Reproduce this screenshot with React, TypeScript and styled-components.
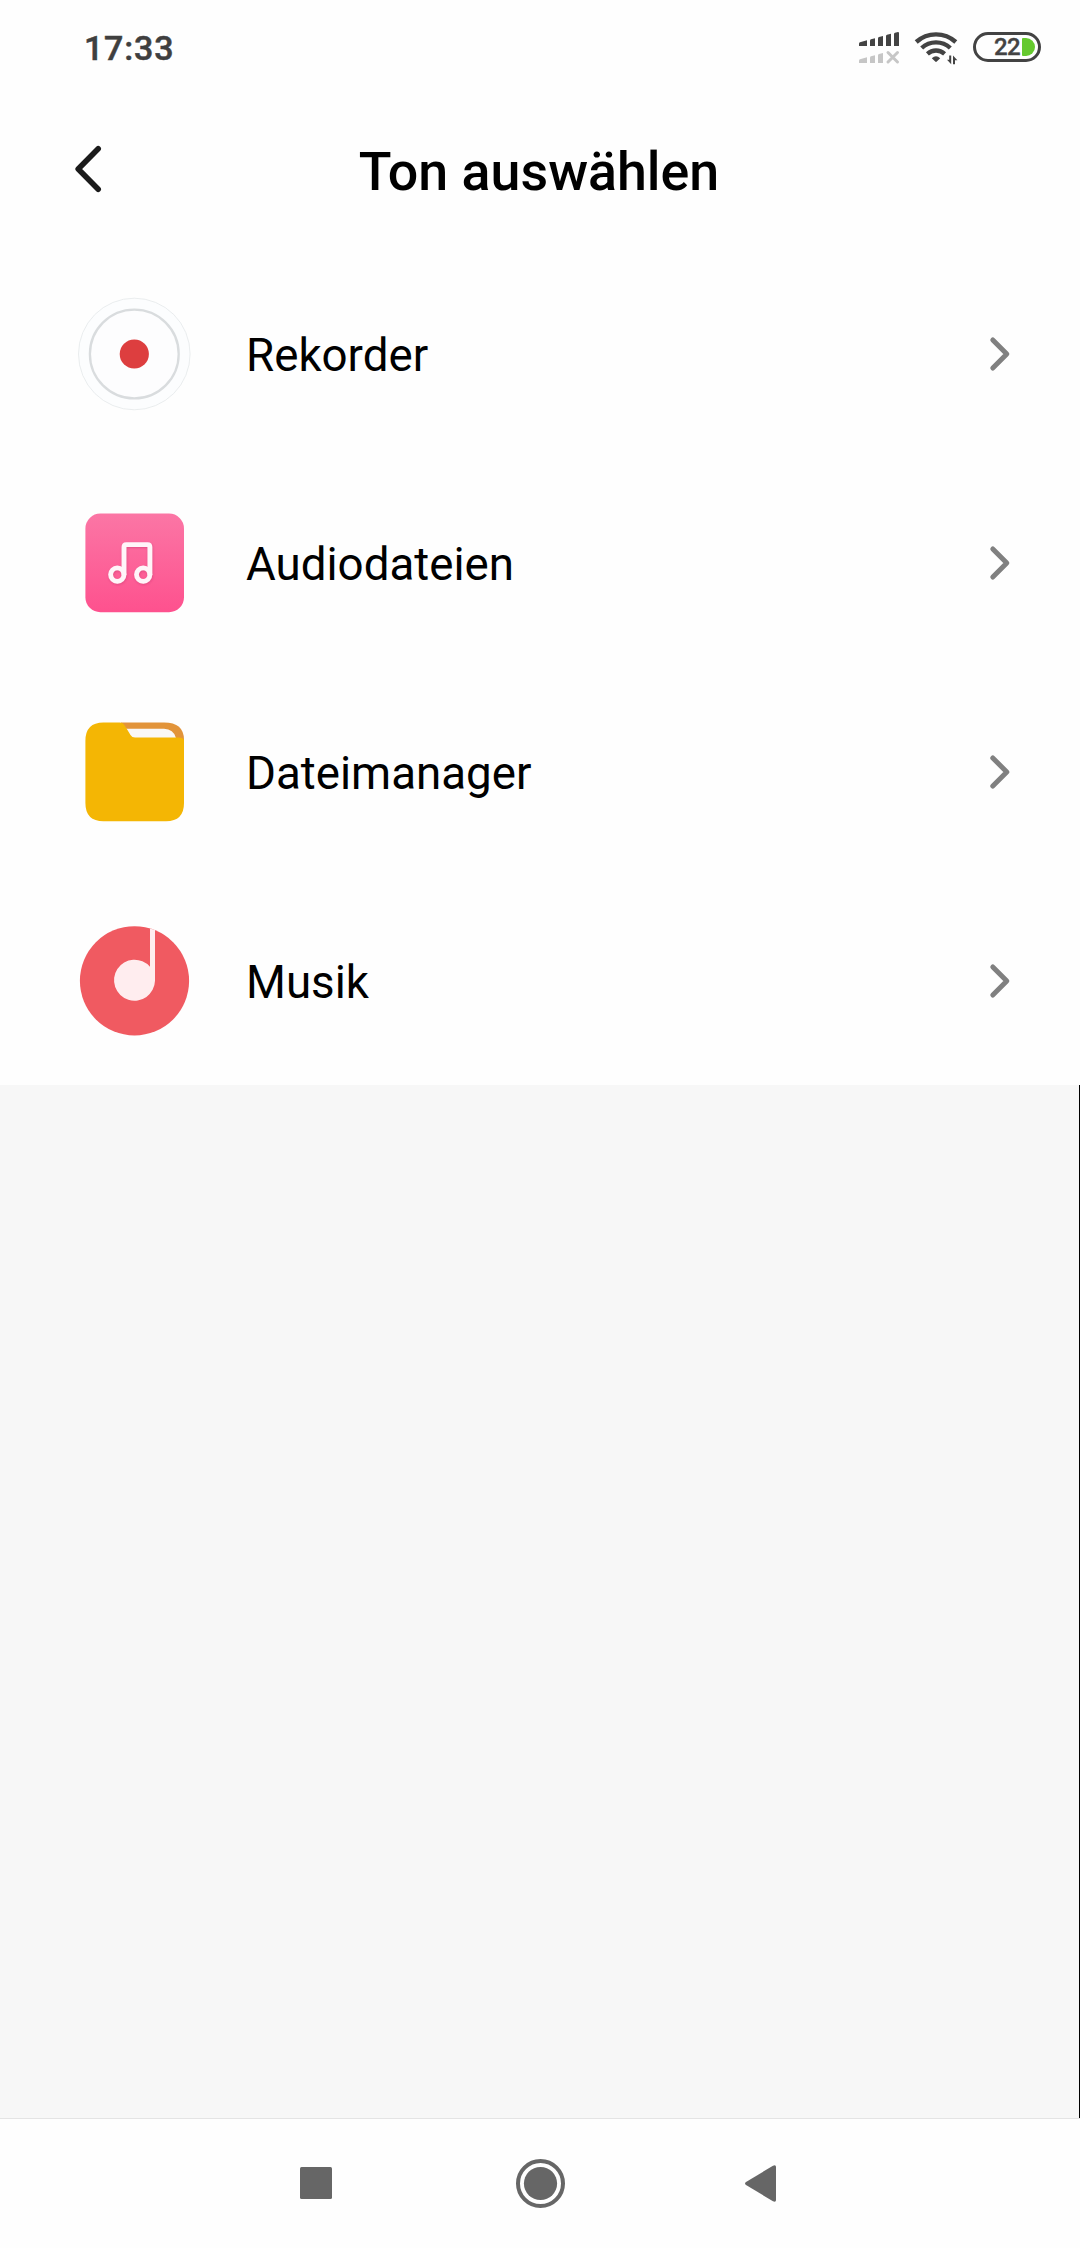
import React from "react";
import styled, { createGlobalStyle } from "styled-components";

const GlobalStyle = createGlobalStyle`
  * { box-sizing: border-box; }
  body { margin: 0; background: #fefefe; font-family: Roboto, "Noto Sans", sans-serif; }
`;

const Screen = styled.div`
  display: flex;
  flex-direction: column;
  width: 1080px;
  height: 2248px;
  background: #fefefe;
  overflow: hidden;
`;

const StatusBar = styled.header`
  display: flex;
  align-items: center;
  justify-content: space-between;
  height: 94px;
  padding: 0 39px 0 84px;
`;

const Time = styled.time`
  font-size: 34px;
  line-height: 40px;
  font-weight: 500;
  letter-spacing: 0.8px;
  color: #3f3f3f;
  padding-top: 1px;
  -webkit-text-stroke: 0.5px #3f3f3f;
`;

const StatusIcons = styled.div`
  display: flex;
  align-items: center;
  gap: 16px;
`;

const Battery = styled.div`
  display: flex;
  align-items: center;
  justify-content: flex-end;
  gap: 2px;
  width: 68px;
  height: 30px;
  padding-right: 3px;
  border: 3px solid #434343;
  border-radius: 15px;
`;

const BatteryLevel = styled.span`
  font-size: 24px;
  line-height: 24px;
  font-weight: 500;
  letter-spacing: -0.7px;
  color: #434343;
  -webkit-text-stroke: 0.3px #434343;
`;

const BatteryFill = styled.span`
  width: 13px;
  height: 18px;
  border-radius: 1px 9px 9px 1px;
  background: #65c92e;
`;

const TitleBar = styled.div`
  display: grid;
  grid-template-columns: 120px 1fr 120px;
  align-items: center;
  height: 155px;
`;

const BackButton = styled.button`
  display: flex;
  align-items: center;
  justify-content: flex-start;
  height: 100px;
  padding: 0 0 5px 75px;
  border: 0;
  background: none;
`;

const Title = styled.h1`
  margin: 0;
  padding-right: 2px;
  font-size: 53.75px;
  line-height: 64px;
  font-weight: 500;
  text-align: center;
  color: #000;
`;

const SourceList = styled.ul`
  margin: 0;
  padding: 0;
  list-style: none;
`;

const SourceRow = styled.li`
  display: grid;
  grid-template-columns: 112px 1fr 20px;
  align-items: center;
  column-gap: 56px;
  height: 209px;
  padding: 0 70px 0 78px;
`;

const Label = styled.span`
  padding-top: 5px;
  font-size: 45.7px;
  line-height: 56px;
  color: #000;
`;

const EmptyArea = styled.main`
  flex: 1;
  background: #f7f7f7;
  border-right: 1px solid #000;
`;

const NavBar = styled.nav`
  display: flex;
  align-items: center;
  height: 130px;
  padding: 0 0 1px 300px;
  border-top: 1px solid #e4e4e4;
`;

const NavIcon = styled.svg<{ $gap?: number; $drop?: number }>`
  display: block;
  flex: none;
  margin-left: ${(p) => p.$gap ?? 0}px;
  margin-top: ${(p) => p.$drop ?? 0}px;
  fill: #666;
`;

const Icon = styled.svg`
  display: block;
  flex: none;
  overflow: visible;
`;

const SignalIcon = () => (
  <Icon width="40" height="32" viewBox="859 31 40 32">
    <g fill="#434343">
      <path d="M860 42.2 L867 40.3 V46 H859 V43.5 Q859 42.5 860 42.2Z" />
      <path d="M870 40.6 Q870 39.6 871 39.3 L875 38.3 V46 H870Z" />
      <path d="M878 38.3 Q878 37.3 879 37 L883 36 V46 H878Z" />
      <path d="M886 36 Q886 35 887 34.7 L891 33.7 V46 H886Z" />
      <path d="M894 34 Q894 33 895 32.8 L898 32 Q899 32 899 33 V46 H894Z" />
    </g>
    <g fill="#c6c6c6">
      <path d="M860 59.2 L867 57.3 V63 H859 V60.5 Q859 59.5 860 59.2Z" />
      <path d="M870 57.6 Q870 56.6 871 56.3 L875 55.3 V63 H870Z" />
      <path d="M878 55.3 Q878 54.3 879 54 L883 53 V63 H878Z" />
    </g>
    <path d="M888 52.5 L897.5 62 M897.5 52.5 L888 62" stroke="#c6c6c6" strokeWidth="3" strokeLinecap="round" />
  </Icon>
);

const WifiIcon = () => (
  <Icon width="42" height="32" viewBox="915 31 42 32">
    <g fill="none" stroke="#434343" strokeWidth="4.4">
      <path d="M916.2 42 A29.5 29.5 0 0 1 955.8 42" />
      <path d="M921.7 48 A21 21 0 0 1 950.3 48" />
      <path d="M927.4 53.8 A13 13 0 0 1 944.6 53.8" />
    </g>
    <path d="M931.8 58.2 Q936 54.2 940.2 58.2 L936.8 61.6 Q936 62.3 935.2 61.6Z" fill="#434343" />
    <path d="M951.2 55.5 V64.2 L947 59.8 H949.2 V55.5Z M953 64.2 V55.5 L957.4 60.2 H955 V64.2Z" fill="#434343" />
  </Icon>
);

const RecorderIcon = () => (
  <Icon width="112" height="112" viewBox="0 0 112 112">
    <circle cx="56.3" cy="56" r="55.8" fill="#fcfdfe" stroke="#e4e8ea" strokeWidth="0.8" />
    <circle cx="56.3" cy="56" r="44.4" fill="#fdfdfe" stroke="#d9dcde" strokeWidth="2.3" />
    <circle cx="56.3" cy="56" r="14.6" fill="#dd3e3f" />
  </Icon>
);

const AudioIcon = () => (
  <Icon width="112" height="112" viewBox="0 0 112 112">
    <defs>
      <linearGradient id="audio-pink" x1="0" y1="0" x2="0" y2="1">
        <stop offset="0" stopColor="#fb76a5" />
        <stop offset="1" stopColor="#fe518e" />
      </linearGradient>
      <filter id="note-shadow" x="-20%" y="-20%" width="140%" height="140%">
        <feDropShadow dx="0.5" dy="1" stdDeviation="1" floodColor="#b82c62" floodOpacity="0.4" />
      </filter>
    </defs>
    <rect x="7.4" y="6.6" width="98.6" height="98.6" rx="15" fill="url(#audio-pink)" />
    <g fill="none" stroke="#fff5f9" strokeWidth="4.8" filter="url(#note-shadow)">
      <circle cx="39.3" cy="67.6" r="6.7" />
      <circle cx="65.2" cy="67.6" r="6.7" />
      <path d="M46 68 V40 Q46 37.7 48.3 37.7 H69.6 Q71.9 37.7 71.9 40 V68" />
    </g>
  </Icon>
);

const FolderIcon = () => (
  <Icon width="112" height="112" viewBox="0 0 112 112">
    <path d="M43 6.6 H86 Q106 6.6 106 24 V40 H43Z" fill="#e2943a" />
    <path d="M46 12.8 H86 Q95.5 13 98 22 H50Z" fill="#faf8f6" />
    <path
      d="M25.5 6.6 H41.5 Q45 6.6 47 10 L52.5 19 Q54 21.5 57 21.5 H101 Q104.5 21.5 106 23.5 V87 Q106 105.2 88 105.2 H25.5 Q7.4 105.2 7.4 87 V25 Q7.4 6.6 25.5 6.6Z"
      fill="#f4b604"
    />
  </Icon>
);

const MusicIcon = () => (
  <Icon width="112" height="112" viewBox="0 0 112 112">
    <circle cx="56.5" cy="55.8" r="54.6" fill="#f05a61" />
    <path d="M72 3.4 L77 5 V55.8 A20.5 20.5 0 1 1 72 41.8Z" fill="#ffedef" />
  </Icon>
);

const Chevron = () => (
  <Icon width="20" height="36" viewBox="0 0 20 36">
    <path d="M2.8 4 L16.8 18 L2.8 32" fill="none" stroke="#808080" strokeWidth="5" strokeLinecap="round" strokeLinejoin="round" />
  </Icon>
);

const sources = [
  { name: "Rekorder", Picture: RecorderIcon },
  { name: "Audiodateien", Picture: AudioIcon },
  { name: "Dateimanager", Picture: FolderIcon },
  { name: "Musik", Picture: MusicIcon },
];

export default function App() {
  return (
    <>
      <GlobalStyle />
      <Screen>
        <StatusBar>
          <Time>17:33</Time>
          <StatusIcons>
            <SignalIcon />
            <WifiIcon />
            <Battery>
              <BatteryLevel>22</BatteryLevel>
              <BatteryFill />
            </Battery>
          </StatusIcons>
        </StatusBar>
        <TitleBar>
          <BackButton aria-label="Zurück">
            <Icon width="26" height="46" viewBox="0 0 26 46">
              <path d="M23.2 2.8 L3.2 23 L23.2 43.2" fill="none" stroke="#1b1b1b" strokeWidth="5.6" strokeLinecap="round" strokeLinejoin="round" />
            </Icon>
          </BackButton>
          <Title>Ton auswählen</Title>
        </TitleBar>
        <SourceList>
          {sources.map(({ name, Picture }) => (
            <SourceRow key={name}>
              <Picture />
              <Label>{name}</Label>
              <Chevron />
            </SourceRow>
          ))}
        </SourceList>
        <EmptyArea />
        <NavBar>
          <NavIcon width="32" height="32" viewBox="0 0 32 32">
            <rect width="32" height="32" rx="1.5" />
          </NavIcon>
          <NavIcon $gap={184} $drop={1} width="49" height="49" viewBox="0 0 49 49">
            <circle cx="24.5" cy="24.5" r="22.5" fill="none" stroke="#666" strokeWidth="4" />
            <circle cx="24.5" cy="24.5" r="16.6" />
          </NavIcon>
          <NavIcon $gap={180} $drop={1} width="31" height="37" viewBox="0 0 31 37">
            <path d="M1 17 L28 0.7 Q31 -0.5 31 2 V35 Q31 37.5 28 36.3 L1 20 Q-1 18.5 1 17Z" />
          </NavIcon>
        </NavBar>
      </Screen>
    </>
  );
}
